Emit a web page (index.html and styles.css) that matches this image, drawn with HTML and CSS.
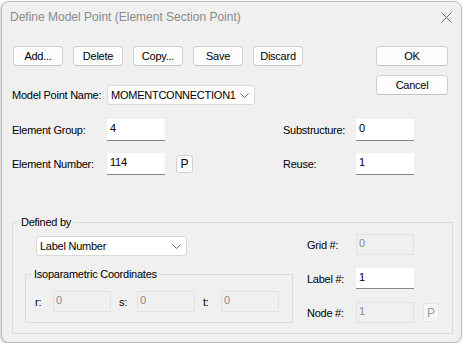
FILE: index.html
```html
<!DOCTYPE html>
<html>
<head>
<meta charset="utf-8">
<link rel="stylesheet" href="styles.css">
</head>
<body>
<div class="window">
  <div class="titlebar">
    <span class="title">Define Model Point (Element Section Point)</span>
    <svg class="close" width="11" height="11" viewBox="0 0 11 11"><path d="M0.5 0.5 L10.5 10.5 M10.5 0.5 L0.5 10.5" stroke="#6a6a6a" stroke-width="1" fill="none"/></svg>
  </div>
  <div class="content">
    <div class="top">
      <div class="top-left">
        <div class="btn-row">
          <button class="btn">Add...</button>
          <button class="btn">Delete</button>
          <button class="btn">Copy...</button>
          <button class="btn">Save</button>
          <button class="btn">Discard</button>
        </div>
        <div class="name-row">
          <span class="lbl">Model Point Name:</span>
          <div class="combo"><span>MOMENTCONNECTION1</span>
            <svg width="9" height="5" viewBox="0 0 9 5"><path d="M0.5 0.5 L4.5 4.5 L8.5 0.5" stroke="#6a6a6a" fill="none"/></svg>
          </div>
        </div>
      </div>
      <div class="top-right">
        <button class="btn wide">OK</button>
        <button class="btn wide">Cancel</button>
      </div>
    </div>

    <div class="fields">
      <span class="lbl">Element Group:</span>
      <div class="edit">4</div>
      <span></span><span></span><span></span>
      <span class="lbl">Substructure:</span>
      <div class="edit">0</div>

      <span class="lbl">Element Number:</span>
      <div class="edit">114</div>
      <span></span>
      <button class="pbtn">P</button>
      <span></span>
      <span class="lbl">Reuse:</span>
      <div class="edit">1</div>
    </div>

    <fieldset class="group">
      <legend>Defined by</legend>
      <div class="defined-inner">
        <div class="left-col">
          <div class="combo combo2"><span>Label Number</span>
            <svg width="9" height="5" viewBox="0 0 9 5"><path d="M0.5 0.5 L4.5 4.5 L8.5 0.5" stroke="#6a6a6a" fill="none"/></svg>
          </div>
          <fieldset class="iso">
            <legend>Isoparametric Coordinates</legend>
            <div class="iso-row">
              <div class="coord"><span class="clbl">r:</span><div class="edit dis">0</div></div>
              <div class="coord"><span class="clbl">s:</span><div class="edit dis">0</div></div>
              <div class="coord"><span class="clbl">t:</span><div class="edit dis">0</div></div>
            </div>
          </fieldset>
        </div>
        <div class="right-col">
          <span class="lbl">Grid #:</span>
          <div class="edit dis">0</div>
          <span></span><span></span>
          <span class="lbl">Label #:</span>
          <div class="edit">1</div>
          <span></span><span></span>
          <span class="lbl">Node #:</span>
          <div class="edit dis">1</div>
          <span></span>
          <button class="pbtn pdis">P</button>
        </div>
      </div>
    </fieldset>
  </div>
</div>
</body>
</html>
```
FILE: styles.css
```css
* { box-sizing: border-box; }
body {
  margin: 0;
  background: #ffffff;
  font-family: "Liberation Sans", Arial, sans-serif;
  font-size: 11px;
  letter-spacing: -0.25px;
  color: #000;
}
.window {
  margin: 1px 0 0 1px;
  width: 461px;
  height: 342px;
  background: #f0f0f0;
  border: 1px solid #bdbdbd;
  border-radius: 8px;
  box-shadow: -1px 1px 3px rgba(0,0,0,0.22);
  overflow: hidden;
}
.titlebar {
  height: 30px;
  display: flex;
  align-items: center;
  justify-content: space-between;
  padding: 0 9px 0 8px;
}
.title {
  font-size: 12px;
  letter-spacing: 0;
  color: #8a8a8a;
}
.content {
  padding: 14px 8px 0 10px;
}
.top {
  display: flex;
  justify-content: space-between;
}
.btn-row {
  display: flex;
  gap: 10px;
  margin-left: 1px;
}
.btn {
  width: 50px;
  height: 20px;
  padding: 0;
  background: #fdfdfd;
  border: 1px solid #d0d0d0;
  border-bottom-color: #c4c4c4;
  border-radius: 4px;
  font: inherit;
  letter-spacing: inherit;
  color: #000;
  display: flex;
  align-items: center;
  justify-content: center;
}
.btn.wide { width: 72px; }
.top-right {
  display: flex;
  flex-direction: column;
  gap: 9px;
  margin-right: 5px;
}
.name-row {
  display: flex;
  align-items: center;
  margin-top: 19px;
}
.name-row .lbl { width: 95px; }
.combo {
  width: 148px;
  height: 20px;
  background: #fff;
  border: 1px solid #d9d9d9;
  border-radius: 3px;
  display: flex;
  align-items: center;
  justify-content: space-between;
  padding: 0 5px 0 3px;
}
.fields {
  margin-top: 14px;
  display: grid;
  grid-template-columns: 95px 58px 11px 17px 90px 73px 58px;
  grid-auto-rows: 22px;
  row-gap: 12px;
  align-items: center;
}
.edit {
  height: 22px;
  background: #fff;
  border-bottom: 1px solid #878787;
  padding: 2px 3px;
  line-height: 14px;
}
.edit.dis {
  height: 21px;
  background: #f0f0f0;
  border: 1px solid #e2e2e2;
  color: #858a90;
  padding: 1px 2px;
}
.pbtn {
  width: 17px;
  height: 18px;
  padding: 0;
  background: #fdfdfd;
  border: 1px solid #d0d0d0;
  border-radius: 3px;
  font: inherit;
  font-size: 12px;
  color: #000;
}
.pbtn.pdis {
  width: 16px;
  height: 19px;
  background: #f6f6f6;
  border-color: #e6e6e6;
  color: #a0a0a0;
}
.group {
  margin: 40px 0 0 0;
  border: 1px solid #dcdcdc;
  padding: 0 10px 10px 12px;
  min-width: 0;
}
.group > legend {
  padding: 0 2px;
  margin-left: -6px;
  line-height: 14px;
}
.defined-inner {
  display: flex;
  align-items: flex-start;
}
.left-col {
  width: 268px;
  padding-top: 7px;
}
.combo2 {
  margin-left: 11px;
  width: 151px;
}
.iso {
  margin: 11px 0 0 0;
  width: 268px;
  border: 1px solid #dcdcdc;
  padding: 10px 14px 10px 9px;
  min-width: 0;
}
.iso > legend {
  padding: 0 2px;
  margin-left: -3px;
  line-height: 14px;
}
.iso-row {
  display: flex;
  gap: 8px;
}
.coord {
  display: flex;
  align-items: center;
}
.clbl { width: 18px; }
.coord .edit { width: 58px; }
.right-col {
  margin-left: 14px;
  padding-top: 5px;
  display: grid;
  grid-template-columns: 49px 58px 9px 16px;
  grid-auto-rows: 21px;
  row-gap: 13px;
  align-items: center;
}
.right-col .edit { height: 21px; }
```
